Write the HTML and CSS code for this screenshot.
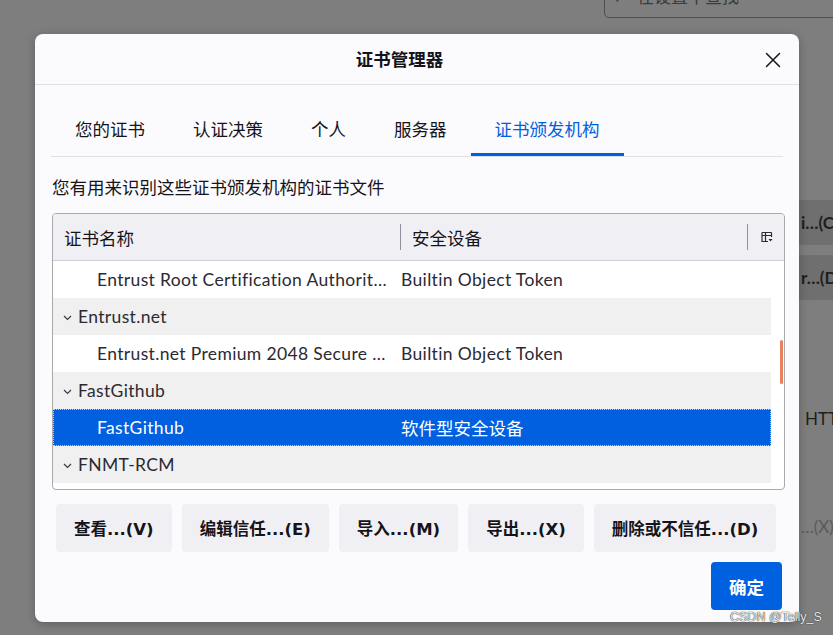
FILE: index.html
```html
<!DOCTYPE html>
<html lang="zh-CN">
<head>
<meta charset="utf-8">
<title>证书管理器</title>
<link rel="stylesheet" href="styles.css">
</head>
<body>
<div class="backdrop">
  <div class="bg-search">
    <svg class="bg-search-icon" width="16" height="16" viewBox="0 0 16 16"><circle cx="9.5" cy="6.5" r="4.5" fill="none" stroke="#3a3a3a" stroke-width="1.4"/><path d="M6.3 9.7 2 14" stroke="#3a3a3a" stroke-width="1.4" stroke-linecap="round"/></svg>
    <span>在设置中查找</span>
  </div>
  <div class="bg-side">
    <div class="bg-btn bg-dark first">i…(C)</div>
    <div class="bg-btn bg-dark">r…(D)</div>
    <div class="bg-text">HTTPS</div>
    <div class="bg-btn bg-dim">…(X)</div>
  </div>
</div>

<div class="dialog">
  <header class="dlg-head">
    <h1 class="dlg-title">证书管理器</h1>
    <button class="close" aria-label="关闭">
      <svg width="16" height="16" viewBox="0 0 16 16"><path d="M1.5 1.5 14.5 14.5M14.5 1.5 1.5 14.5" stroke="#15141a" stroke-width="1.5" stroke-linecap="round"/></svg>
    </button>
  </header>

  <div class="dlg-body">
    <nav class="tabs">
      <div class="tab">您的证书</div>
      <div class="tab">认证决策</div>
      <div class="tab">个人</div>
      <div class="tab">服务器</div>
      <div class="tab active">证书颁发机构</div>
    </nav>

    <p class="desc">您有用来识别这些证书颁发机构的证书文件</p>

    <div class="tree">
      <div class="tree-head">
        <div class="hcol hc1">证书名称</div>
        <div class="hcol hc2">安全设备</div>
        <div class="picker">
          <svg width="12" height="12" viewBox="0 0 12 12"><path d="M1 1.5h9.5M1 1.5v9h6M10.5 1.5V6M1 4.5h9.5M4.5 1.5v9" fill="none" stroke="#2b2a33" stroke-width="1.2"/><path d="M7.5 8h4l-2 2.5z" fill="#2b2a33"/></svg>
        </div>
      </div>
      <div class="tree-body">
        <div class="rows">
          <div class="row child">
            <div class="c1">Entrust Root Certification Authority - G4</div>
            <div class="c2">Builtin Object Token</div>
          </div>
          <div class="row group alt">
            <div class="c1"><svg class="twisty" width="9" height="6" viewBox="0 0 9 6"><path d="M1 1l3.5 3.5L8 1" fill="none" stroke="#3a3944" stroke-width="1.2"/></svg>Entrust.net</div>
            <div class="c2"></div>
          </div>
          <div class="row child">
            <div class="c1">Entrust.net Premium 2048 Secure Server CA</div>
            <div class="c2">Builtin Object Token</div>
          </div>
          <div class="row group alt">
            <div class="c1"><svg class="twisty" width="9" height="6" viewBox="0 0 9 6"><path d="M1 1l3.5 3.5L8 1" fill="none" stroke="#3a3944" stroke-width="1.2"/></svg>FastGithub</div>
            <div class="c2"></div>
          </div>
          <div class="row child selected">
            <div class="c1">FastGithub</div>
            <div class="c2">软件型安全设备</div>
          </div>
          <div class="row group alt">
            <div class="c1"><svg class="twisty" width="9" height="6" viewBox="0 0 9 6"><path d="M1 1l3.5 3.5L8 1" fill="none" stroke="#3a3944" stroke-width="1.2"/></svg>FNMT-RCM</div>
            <div class="c2"></div>
          </div>
          <div class="row child">
            <div class="c1">AC RAIZ FNMT-RCM</div>
            <div class="c2">Builtin Object Token</div>
          </div>
        </div>
        <div class="scrollbar"><div class="thumb"></div></div>
      </div>
    </div>

    <div class="actions">
      <button class="btn">查看...(V)</button>
      <button class="btn">编辑信任...(E)</button>
      <button class="btn">导入...(M)</button>
      <button class="btn">导出...(X)</button>
      <button class="btn">删除或不信任...(D)</button>
    </div>

    <div class="footer">
      <button class="btn primary">确定</button>
    </div>
  </div>
</div>

<div class="watermark">CSDN @Telly_S</div>
</body>
</html>
```

FILE: styles.css
```css
* { box-sizing: border-box; }

html, body {
  margin: 0;
  padding: 0;
}

body {
  width: 833px;
  height: 635px;
  overflow: hidden;
  position: relative;
  background: #7e7e7e;
  font-family: "Lato", "Noto Sans CJK SC", sans-serif;
  color: #15141a;
}

/* ---------- page behind the modal ---------- */
.backdrop {
  display: flex;
  flex-direction: column;
  height: 100%;
}

.bg-search {
  margin-left: 604px;
  margin-top: -22px;
  width: 260px;
  height: 40px;
  border: 1px solid #4e4e4e;
  border-radius: 5px;
  display: flex;
  align-items: flex-end;
  gap: 6px;
  padding: 0 0 10px 10px;
  color: #3a3a3a;
  font-size: 17px;
  line-height: 20px;
}

.bg-search-icon { flex: none; margin-bottom: 4px; }

.bg-side {
  margin-left: 799px;
  margin-top: 182px;
  display: flex;
  flex-direction: column;
  font-size: 17px;
  font-weight: 700;
}

.bg-btn {
  height: 45px;
  display: flex;
  align-items: center;
  padding-left: 2px;
  white-space: nowrap;
  color: #1e1e1e;
}

.bg-dark { background: #6f6f6f; }
.bg-dark + .bg-dark { margin-top: 10px; }

.bg-text {
  margin-top: 108px;
  height: 24px;
  padding-left: 6px;
  font-weight: 400;
  color: #1e1e1e;
}

.bg-dim {
  margin-top: 72px;
  color: #5a5a5a;
  font-weight: 400;
}

/* ---------- dialog ---------- */
.dialog {
  position: absolute;
  left: 35px;
  top: 34px;
  width: 764px;
  height: 588px;
  background: #fbfbfe;
  border-radius: 8px;
  box-shadow: 0 2px 10px rgba(0,0,0,0.25);
  display: flex;
  flex-direction: column;
}

.dlg-head {
  height: 51px;
  border-bottom: 1px solid #e0e0e6;
  display: flex;
  align-items: center;
  justify-content: center;
  padding-right: 35px;
  position: relative;
}

.dlg-title {
  margin: 0;
  font-size: 17.5px;
  font-weight: 700;
  line-height: 24px;
  padding-top: 2px;
}

.close {
  position: absolute;
  right: 18px;
  top: 18px;
  width: 16px;
  height: 16px;
  padding: 0;
  border: 0;
  background: none;
  display: flex;
}

.dlg-body {
  flex: 1;
  display: flex;
  flex-direction: column;
  padding: 20px 14px 12px 17px;
}

/* tabs */
.tabs {
  display: flex;
  margin-left: -1px;
  margin-right: 2px;
  border-bottom: 1px solid #e0e0e6;
}

.tab {
  padding: 0 24px;
  height: 51px;
  line-height: 50px;
  font-size: 17.5px;
  color: #15141a;
  white-space: nowrap;
}

.tab.active {
  color: #0061e0;
  border-bottom: 3px solid #0061e0;
  margin-bottom: -1px;
  line-height: 49px;
}

.desc {
  margin: 19px 0 0 0;
  font-size: 17.5px;
  line-height: 24px;
  color: #15141a;
}

/* tree */
.tree {
  margin-top: 13px;
  height: 277px;
  border: 1px solid #a8a8ad;
  border-radius: 4px;
  overflow: hidden;
  display: flex;
  flex-direction: column;
  background: #fff;
}

.tree-head {
  height: 47px;
  flex: none;
  background: #f0f0f4;
  border-bottom: 1px solid #cfcfd8;
  display: flex;
  align-items: center;
  font-size: 17.5px;
}

.hcol {
  height: 100%;
  display: flex;
  align-items: center;
  position: relative;
}

.hc1 { width: 347px; padding-left: 11px; }

.hc2 { width: 347px; padding-left: 12px; }

.hc2::before,
.picker::before {
  content: "";
  position: absolute;
  left: 0;
  top: 10px;
  bottom: 10px;
  width: 1px;
  background: #8f8f9d;
}

.picker {
  flex: 1;
  height: 100%;
  position: relative;
  display: flex;
  align-items: center;
  justify-content: center;
  padding-left: 2px;
}

.tree-body {
  flex: 1;
  display: flex;
  min-height: 0;
}

.rows {
  width: 718px;
  overflow: hidden;
}

.row {
  height: 37px;
  display: flex;
  align-items: center;
  font-size: 17.5px;
  letter-spacing: 0.35px;
  color: #2b2a33;
  white-space: nowrap;
}

.row.alt { background: #f0f0f0; }

.row .c1 {
  width: 347px;
  padding-right: 5px;
  overflow: hidden;
  text-overflow: ellipsis;
  display: flex;
  align-items: center;
}

.row.child .c1 { padding-left: 44px; display: block; }
.row.group .c1 { padding-left: 10px; }

.twisty { margin-right: 6px; margin-top: 2px; flex: none; }

.row .c2 { padding-left: 1px; }

.row.selected {
  background: #0060df;
  color: #fff;
  outline: 1px dotted #e9d25a;
  outline-offset: -1px;
}

.row.selected .c2 { letter-spacing: 0; }

.scrollbar {
  flex: 1;
  position: relative;
}

.thumb {
  position: absolute;
  right: 1px;
  top: 79px;
  width: 3px;
  height: 44px;
  border-radius: 2px;
  background: #e8825c;
}

/* buttons */
.actions {
  margin-top: 14px;
  padding: 0 4px;
  display: flex;
  gap: 10px;
}

.btn {
  height: 48px;
  padding: 0 18px;
  border: 0;
  border-radius: 4px;
  background: #f0f0f4;
  color: #15141a;
  font-family: "DejaVu Sans", "Noto Sans CJK SC", sans-serif;
  font-size: 16.5px;
  font-weight: 700;
  white-space: nowrap;
}

.footer {
  margin-top: 10px;
  display: flex;
  justify-content: flex-end;
  padding-right: 3px;
}

.btn.primary {
  background: #0061e0;
  color: #fff;
  padding: 0 18px;
  font-size: 17.5px;
}

.watermark {
  position: absolute;
  left: 730px;
  top: 610px;
  font-family: "Liberation Sans", sans-serif;
  font-size: 12.5px;
  color: #e8e8e8;
  text-shadow: 0 0 1px #333, 0 0 1px #333;
  white-space: nowrap;
}
```
